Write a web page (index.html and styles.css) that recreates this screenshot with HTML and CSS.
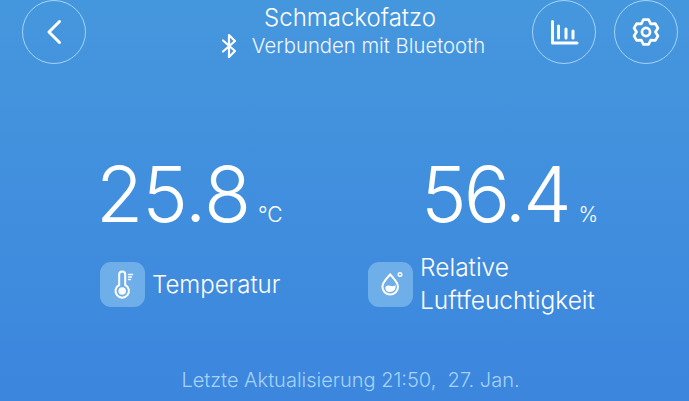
FILE: index.html
```html
<!DOCTYPE html>
<html lang="de">

<head>
  <meta charset="UTF-8" />
  <title>Schmackofatzo</title>
  <link rel="stylesheet" href="styles.css">
</head>

<body>
  <header class="top">
    <button class="round back">
      <svg width="22" height="28" viewBox="0 0 22 28"><path d="M16.500 3.500 6 14l10.500 10.500" /></svg>
    </button>
    <div class="title">
      <div class="name">Schmackofatzo</div>
      <div class="status">
        <svg class="bt" width="18" height="26" viewBox="0 0 18 26"><path d="M3 7.500l12 10.500-6 6V2l6 6L3 18.500" /></svg>
        <span>Verbunden mit Bluetooth</span>
      </div>
    </div>
    <div class="actions">
      <button class="round">
        <svg width="30" height="30" viewBox="0 0 30 30">
          <path d="M3.500 4.500V26H28" />
          <path d="M9.500 9v12M17 12v9M24 14v7" />
        </svg>
      </button>
      <button class="round">
        <svg width="30" height="30" viewBox="0 0 30 30">
          <g transform="translate(1.500 1.500) scale(.9)">
            <path d="M12.100 1.300h5.800l2.350 4.600 5.150-.27 2.900 5.040L25.500 15l2.800 4.330-2.900 5.040-5.150-.27-2.350 4.600h-5.800L9.750 24.100l-5.150.27-2.900-5.040L4.500 15 1.700 10.670l2.900-5.040 5.150.27z" />
            <circle cx="15" cy="15" r="4.500" />
          </g>
        </svg>
      </button>
    </div>
  </header>

  <main class="readings">
    <section class="reading temp">
      <div class="value">25.8<span class="unit">°C</span></div>
      <div class="label">
        <span class="tile">
          <svg width="30" height="30" viewBox="0 0 30 30">
            <path class="line" d="M11.200 5.500a3 3 0 0 1 6 0v10.500a6.700 6.700 0 1 1-6 0z" />
            <circle class="solid" cx="14.200" cy="22" r="3.800" />
            <path class="line thin" d="M20.500 5.500h4M20.500 8h3M20.500 10.500h2" />
          </svg>
        </span>
        <span>Temperatur</span>
      </div>
    </section>
    <section class="reading humid">
      <div class="value">56.4<span class="unit">%</span></div>
      <div class="label">
        <span class="tile">
          <svg width="30" height="30" viewBox="0 0 30 30">
            <path class="line" d="M14.200 5.500c4 4.500 7.800 8 7.800 12.300a7.800 7.800 0 0 1-15.600 0c0-4.300 3.800-7.800 7.800-12.300z" />
            <path class="solid" d="M9.300 18c2-2 4-1.500 6-1s3.500 0 4.300-1c.7 4-1.800 7-5.400 7S9.300 21 9.300 18z" />
            <circle class="line thin" cx="24" cy="5.500" r="1.800" />
          </svg>
        </span>
        <span>Relative<br>Luftfeuchtigkeit</span>
      </div>
    </section>
  </main>

  <footer class="updated">Letzte Aktualisierung 21:50,&nbsp; 27. Jan.</footer>
</body>

</html>
```

FILE: styles.css
```css
body {
  margin: 0;
  width: 689px;
  height: 401px;
  overflow: hidden;
  background: linear-gradient(#4597dd, #3c86de);
  color: white;
  font-family: "Inter", sans-serif;
  display: flex;
  flex-direction: column;
}

.top {
  display: flex;
  justify-content: space-between;
  padding: 0 11px 0 22px;
  height: 64px;
}

.round {
  width: 64px;
  height: 64px;
  border: 1px solid #a5d3f3;
  border-radius: 50%;
  background: none;
  padding: 0;
  display: flex;
  align-items: center;
  justify-content: center;
}

.round svg {
  fill: none;
  stroke: white;
  stroke-width: 3;
  stroke-linecap: round;
  stroke-linejoin: round;
}

.actions {
  display: flex;
  gap: 18px;
}

.title {
  flex: 1;
  text-align: center;
  padding: 3px 0 0 82px;
}

.name {
  font-size: 24px;
  line-height: 29px;
  font-weight: 300;
}

.status {
  display: flex;
  justify-content: center;
  align-items: center;
  gap: 14px;
  padding-left: 5px;
  font-size: 20.300px;
  font-weight: 300;
  line-height: 28px;
  color: #eef7fd;
}

.bt {
  fill: none;
  stroke: white;
  stroke-width: 2.200;
  stroke-linecap: round;
  stroke-linejoin: round;
}

.readings {
  display: flex;
  padding: 73px 0 0 100px;
  flex: 1;
}

.reading {
  width: 268px;
}

.value {
  font-size: 77px;
  line-height: 114px;
  font-weight: 300;
  letter-spacing: -1px;
  margin-left: -4px;
  white-space: nowrap;
}

.humid .value {
  margin-left: 0;
  padding-left: 53px;
  letter-spacing: -3px;
}

.unit {
  font-size: 21px;
  line-height: 1;
  letter-spacing: 0;
  margin-left: 8px;
}

.humid .unit {
  margin-left: 10px;
}

.label {
  display: flex;
  align-items: center;
  gap: 7px;
  min-height: 66px;
  font-size: 24.500px;
  line-height: 33px;
  font-weight: 300;
}

.temp .label {
  font-size: 24px;
}

.tile {
  width: 45px;
  height: 45px;
  border-radius: 11px;
  background: #6eaee9;
  display: flex;
  align-items: center;
  justify-content: center;
  flex: none;
}

.tile .line {
  fill: none;
  stroke: white;
  stroke-width: 2;
  stroke-linecap: round;
}

.tile .thin {
  stroke-width: 1.400;
}

.tile .solid {
  fill: white;
}

.updated {
  text-align: center;
  color: #a5d2f5;
  font-size: 20px;
  font-weight: 300;
  line-height: 24px;
  padding: 0 0 9px 12px;
}
```
